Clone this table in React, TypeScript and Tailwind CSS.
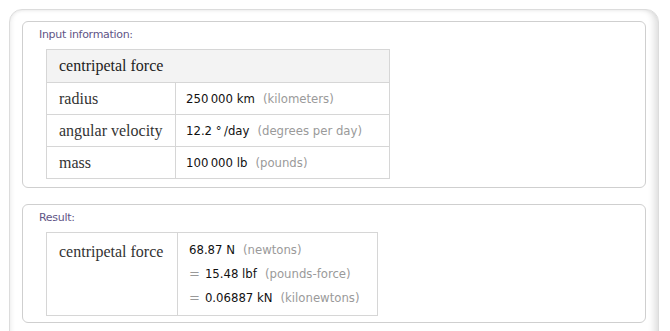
import React from "react";

const serif = { fontFamily: '"Liberation Serif", serif' };
const cond = { fontFamily: '"DejaVu Sans Condensed", "DejaVu Sans", sans-serif', fontStretch: "condensed" as const };

function Unit({ v, u, p }: { v: string; u: string; p: string }) {
  return (
    <span className="whitespace-nowrap" style={cond}>
      <span className="text-[#111]">{v}</span>
      <span className="text-[#111]">{u}</span>
      <span className="ml-[8px] text-[#9a9a9a]">({p})</span>
    </span>
  );
}

export default function App() {
  return (
    <div className="w-[670px] h-[331px] bg-white overflow-hidden pt-[9px] pl-[9px]" style={{ fontFamily: '"DejaVu Sans", sans-serif' }}>
      <div className="w-[650px] h-[340px] rounded-[13px] border border-[#dcdcdc] bg-white shadow-[inset_-7px_0_6px_-3px_rgba(0,0,0,0.12),inset_4px_0_5px_-3px_rgba(0,0,0,0.08),inset_0_3px_4px_-3px_rgba(0,0,0,0.08)] px-[12px] pt-[11px] flex flex-col gap-[16px]">
        <div className="h-[167px] rounded-[6px] border border-[#cfcfcf] bg-white pl-[16px] pt-[6px] flex flex-col items-start">
          <div className="text-[11px] leading-[14px] text-[#5f5586] tracking-[-0.3px]">Input information:</div>
          <table className="mt-[7px] ml-[7px] border-collapse text-[13px] w-[343px] table-fixed">
            <colgroup>
              <col className="w-[129px]" />
              <col className="w-[214px]" />
            </colgroup>
            <tbody>
              <tr className="h-[33px] bg-[#f3f3f3]">
                <td colSpan={2} className="border border-[#d6d6d6] pl-[12px] text-[16px] text-[#222]" style={serif}>centripetal force</td>
              </tr>
              <tr className="h-[32px]">
                <td className="border border-[#d6d6d6] pl-[12px] text-[16px] text-[#333]" style={serif}>radius</td>
                <td className="border border-[#d6d6d6] pl-[10px]"><Unit v={"250\u2009000"} u=" km" p="kilometers" /></td>
              </tr>
              <tr className="h-[32px]">
                <td className="border border-[#d6d6d6] pl-[12px] text-[16px] text-[#333]" style={serif}>angular velocity</td>
                <td className="border border-[#d6d6d6] pl-[10px]"><Unit v="12.2" u={" °\u2009/day"} p="degrees per day" /></td>
              </tr>
              <tr className="h-[32px]">
                <td className="border border-[#d6d6d6] pl-[12px] text-[16px] text-[#333]" style={serif}>mass</td>
                <td className="border border-[#d6d6d6] pl-[10px]"><Unit v={"100\u2009000"} u=" lb" p="pounds" /></td>
              </tr>
            </tbody>
          </table>
        </div>
        <div className="h-[119px] rounded-[6px] border border-[#cfcfcf] bg-white pl-[16px] pt-[6px] flex flex-col items-start">
          <div className="text-[11px] leading-[14px] text-[#5f5586] tracking-[-0.3px]">Result:</div>
          <table className="mt-[7px] ml-[7px] border-collapse text-[13px] w-[331px] table-fixed">
            <colgroup>
              <col className="w-[131px]" />
              <col className="w-[200px]" />
            </colgroup>
            <tbody>
              <tr>
                <td className="border border-[#d6d6d6] pl-[12px] align-top pt-[7px] text-[16px] text-[#333] whitespace-nowrap" style={serif}>centripetal force</td>
                <td className="border border-[#d6d6d6] pl-[11px] py-[5px]">
                  <div className="h-[24px] flex items-center"><Unit v="68.87" u=" N" p="newtons" /></div>
                  <div className="h-[24px] flex items-center"><span className="text-[#999] mr-[5px]">=</span><Unit v="15.48" u=" lbf" p="pounds-force" /></div>
                  <div className="h-[24px] flex items-center"><span className="text-[#999] mr-[5px]">=</span><Unit v="0.06887" u=" kN" p="kilonewtons" /></div>
                </td>
              </tr>
            </tbody>
          </table>
        </div>
      </div>
    </div>
  );
}
